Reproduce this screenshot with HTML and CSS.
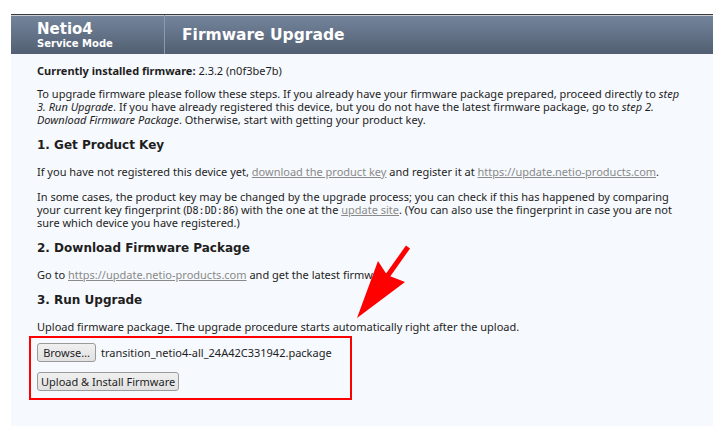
FILE: index.html
```html
<!DOCTYPE html>
<html>
<head>
<meta charset="utf-8">
<link rel="stylesheet" href="styles.css">
</head>
<body>
<div class="page">
  <div class="header">
    <div class="brand">
      <div class="brand-name">Netio4</div>
      <div class="brand-mode">Service Mode</div>
    </div>
    <div class="title">Firmware Upgrade</div>
  </div>
  <div class="content">
    <p class="current"><b>Currently installed firmware:</b> 2.3.2 (n0f3be7b)</p>
    <p>To upgrade firmware please follow these steps. If you already have your firmware package prepared, proceed directly to <i>step 3. Run Upgrade</i>. If you have already registered this device, but you do not have the latest firmware package, go to <i>step 2. Download Firmware Package</i>. Otherwise, start with getting your product key.</p>
    <h2>1. Get Product Key</h2>
    <p>If you have not registered this device yet, <a href="#">download the product key</a> and register it at <a href="#">https://update.netio-products.com</a>.</p>
    <p>In some cases, the product key may be changed by the upgrade process; you can check if this has happened by comparing your current key fingerprint (<code>D8:DD:86</code>) with the one at the <a href="#">update site</a>. (You can also use the fingerprint in case you are not sure which device you have registered.)</p>
    <h2>2. Download Firmware Package</h2>
    <p>Go to <a href="#">https://update.netio-products.com</a> and get the latest firmware.</p>
    <h2>3. Run Upgrade</h2>
    <p class="last">Upload firmware package. The upgrade procedure starts automatically right after the upload.</p>
    <div class="upload-box">
      <div class="file-row">
        <button class="btn btn-browse">Browse…</button>
        <span class="file-name">transition_netio4-all_24A42C331942.package</span>
      </div>
      <div class="submit-row">
        <button class="btn">Upload &amp; Install Firmware</button>
      </div>
    </div>
  </div>
  <svg class="arrow" width="713" height="426" viewBox="0 0 713 426">
    <line x1="408" y1="247" x2="386" y2="278" stroke="#ff0000" stroke-width="5"/>
    <polygon points="357,318 378,261 387,275 405,282" fill="#ff0000"/>
  </svg>
</div>
</body>
</html>
```
FILE: styles.css
```css
html, body {
  margin: 0;
  padding: 0;
  background: #ffffff;
}
.page {
  position: relative;
  padding-top: 14px;
  padding-left: 11px;
  height: 412px;
  display: flex;
  flex-direction: column;
  font-family: "Noto Sans", "Open Sans", sans-serif;
  font-size: 11px;
  color: #1e1e1e;
}
.header {
  display: flex;
  height: 39px;
  border-top: 1px solid #3a3a3a;
  box-shadow: inset 0 1px 0 #c9ced6;
  background: linear-gradient(#74859c, #525f72);
  color: #ffffff;
  font-family: "DejaVu Sans", sans-serif;
  font-weight: bold;
}
.brand {
  width: 127px;
  padding-left: 26px;
  padding-top: 1px;
  border-right: 1px solid #8e9aab;
  display: flex;
  flex-direction: column;
  justify-content: center;
}
.brand-name {
  font-size: 15px;
  line-height: 17px;
}
.brand-mode {
  font-size: 10px;
  line-height: 12px;
}
.title {
  padding-left: 17px;
  padding-top: 1px;
  font-size: 15.5px;
  display: flex;
  align-items: center;
}
.content {
  flex: 1;
  background: #f6f9fd;
  padding: 10px 26px 0 26px;
}
.content p {
  margin: 0 0 12px 0;
  line-height: 13px;
}
.content p.current {
  margin-bottom: 10px;
}
.content p.last {
  margin-bottom: 0;
}
.content b {
  font-weight: bold;
}
.content h2 {
  font-family: "DejaVu Sans", sans-serif;
  font-size: 12px;
  font-weight: bold;
  margin: 12px 0 12px 0;
  line-height: 15px;
}
.content a {
  color: #8a8a8a;
  text-decoration: underline;
}
.content code {
  font-family: "DejaVu Sans Mono", monospace;
  font-size: 10px;
  line-height: 1;
}
.upload-box {
  margin-left: -8px;
  width: 307px;
  border: 2px solid #ff0000;
  padding: 5px 6px 7px 6px;
  margin-top: 3px;
}
.file-row {
  display: flex;
  align-items: center;
  gap: 5px;
}
.submit-row {
  margin-top: 10px;
}
.btn {
  font-family: "Noto Sans", "Open Sans", sans-serif;
  font-size: 11px;
  color: #1e1e1e;
  height: 19px;
  padding: 0 3px;
  border: 1px solid #9a9a9a;
  border-radius: 3px;
  background: linear-gradient(#f0f0f0, #e1e1e1);
}
.btn-browse {
  width: 59px;
}
.arrow {
  position: absolute;
  left: 0;
  top: 0;
  pointer-events: none;
}
```
